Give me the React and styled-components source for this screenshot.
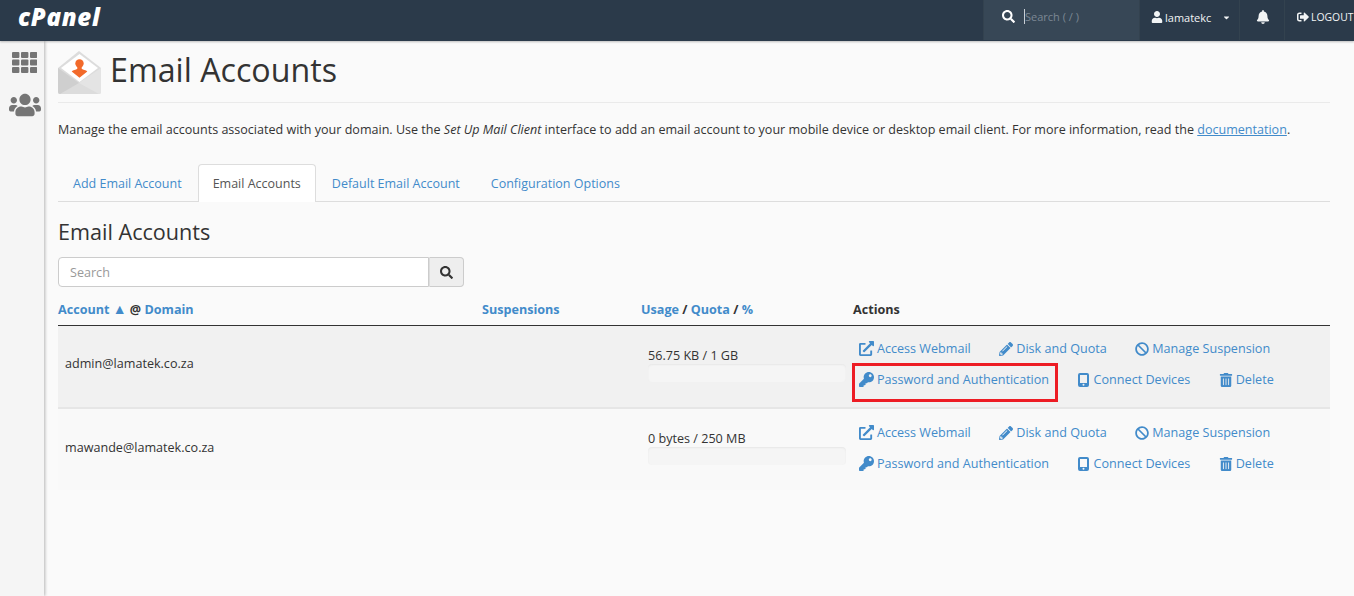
import styled, { createGlobalStyle } from 'styled-components';
import {
  FaBan,
  FaBell,
  FaCaretDown,
  FaExternalLinkAlt,
  FaKey,
  FaPencilAlt,
  FaSearch,
  FaSignOutAlt,
  FaTrashAlt,
  FaUser,
  FaUsers,
} from 'react-icons/fa';

const GlobalStyle = createGlobalStyle`
  html, body {
    margin: 0;
    height: 100%;
    overflow: hidden;
    background: #fafafa;
  }
  * { box-sizing: border-box; }
  body {
    font-family: "Open Sans", "Liberation Sans", sans-serif;
    font-size: 12.6px;
    color: #333;
  }
`;

const Page = styled.div`
  height: 596px;
  display: flex;
  flex-direction: column;
`;

const TopBar = styled.header`
  height: 41px;
  flex: none;
  background: #2b3a4a;
  display: flex;
  align-items: stretch;
  color: #fff;
  box-shadow: 0 1px 2px rgba(0, 0, 0, 0.25);
  position: relative;
  z-index: 2;
  overflow: hidden;
`;

const Logo = styled.div`
  margin: 0 auto 0 18px;
  font-size: 24px;
  line-height: 34px;
  font-weight: 800;
  font-style: italic;
  letter-spacing: 0.7px;
  color: #fff;
`;

const TopSearch = styled.div`
  width: 156px;
  background: #374756;
  border-left: 1px solid #33424f;
  display: flex;
  align-items: center;
  height: 40px;
  padding: 0 0 7px 18px;
  font-size: 11px;
  color: #7c8894;
  svg { flex: none; }
`;

const Caret = styled.span`
  width: 1px;
  height: 15px;
  background: #c8ced4;
  margin-left: 9px;
`;

const TopItem = styled.div`
  width: ${(p) => p.$width}px;
  flex: none;
  height: 40px;
  border-left: 1px solid #33424f;
  display: flex;
  align-items: center;
  padding: 0 0 6px ${(p) => p.$pad}px;
  font-size: ${(p) => p.$size ?? 11}px;
  gap: 2px;
  color: #f2f4f5;
  white-space: nowrap;
  svg { flex: none; }
`;

const Body = styled.div`
  flex: 1;
  display: flex;
  min-height: 0;
`;

const SideBar = styled.nav`
  width: 44px;
  flex: none;
  background: #f5f5f5;
  box-shadow: 1px 0 3px rgba(0, 0, 0, 0.28);
  display: flex;
  flex-direction: column;
  align-items: center;
  padding: 11px 0 0 5px;
  gap: 16px;
  color: #757575;
`;

const Content = styled.main`
  flex: 1;
  min-width: 0;
  padding: 9px 24px 0 14px;
`;

const TitleRow = styled.div`
  display: flex;
  align-items: flex-start;
  gap: 9px;
  height: 53px;
  border-bottom: 1px solid #eaeaea;
  svg { margin-top: 1px; }
`;

const Title = styled.h1`
  margin: -1px 0 0;
  font-size: 32.2px;
  line-height: 42px;
  font-weight: 400;
  color: #333;
`;

const Intro = styled.p`
  margin: 18px 0 0;
  font-size: 12.55px;
  line-height: 18px;
  white-space: nowrap;
  color: #333;
  a {
    color: #428bca;
    text-decoration: underline;
  }
`;

const Tabs = styled.div`
  display: flex;
  gap: 1px;
  margin-top: 25px;
  height: 38px;
  font-size: 12.5px;
  border-bottom: 1px solid #ddd;
`;

const Tab = styled.div`
  height: ${(p) => (p.$active ? '38px' : '37px')};
  padding: 0 14px;
  display: flex;
  align-items: center;
  color: ${(p) => (p.$active ? '#555' : '#428bca')};
  background: ${(p) => (p.$active ? '#fff' : 'transparent')};
  border: 1px solid ${(p) => (p.$active ? '#ddd' : 'transparent')};
  border-bottom: 0;
  border-radius: 4px 4px 0 0;
`;

const SectionTitle = styled.h2`
  margin: 16px 0 0;
  font-size: 21.6px;
  line-height: 27px;
  font-weight: 400;
  color: #333;
`;

const SearchGroup = styled.div`
  display: flex;
  width: 406px;
  height: 30px;
  margin-top: 12px;
`;

const SearchInput = styled.div`
  flex: 1;
  background: #fff;
  border: 1px solid #ccc;
  border-radius: 4px 0 0 4px;
  padding: 0 11px;
  display: flex;
  align-items: center;
  color: #999;
`;

const SearchButton = styled.div`
  width: 35px;
  background: #eee;
  border: 1px solid #ccc;
  border-left-color: #ddd;
  border-radius: 0 4px 4px 0;
  display: flex;
  align-items: center;
  justify-content: center;
  color: #333;
`;

const columns = '424px 159px 212px 1fr';

const HeaderRow = styled.div`
  display: grid;
  grid-template-columns: ${columns};
  height: 39px;
  border-bottom: 1px solid #333;
  padding-top: 14px;
  font-weight: 700;
  line-height: 18px;
  color: #333;
  a {
    color: #428bca;
  }
`;

const SortArrow = styled.span`
  font-size: 14px;
  line-height: 14px;
`;

const Row = styled.div`
  display: grid;
  grid-template-columns: ${columns};
  height: ${(p) => p.$height}px;
  background: ${(p) => (p.$shaded ? '#f1f1f1' : '#f9f9f9')};
  border-bottom: ${(p) => (p.$shaded ? '2px solid #e6e6e6' : '0')};
`;

const EmailCell = styled.div`
  padding: ${(p) => p.$top}px 0 0 7px;
  line-height: 18px;
`;

const UsageCell = styled.div`
  padding: 21px 7px 0;
  line-height: 18px;
`;

const QuotaBar = styled.div`
  width: 198px;
  height: 18px;
  margin-top: -1px;
  background: #f5f5f5;
  border-radius: 4px;
  box-shadow: inset 0 1px 2px rgba(0, 0, 0, 0.06);
`;

const ActionsCell = styled.div`
  padding: ${(p) => p.$top}px 0 0 6px;
`;

const ActionLine = styled.div`
  display: flex;
  gap: 28.5px;
  height: 31px;
`;

const ActionLink = styled.div`
  position: relative;
  display: flex;
  align-items: center;
  color: #428bca;
  white-space: nowrap;
  ${(p) =>
    p.$marked &&
    `&::after {
      content: '';
      position: absolute;
      left: -7px;
      right: -9px;
      top: -1px;
      height: 33px;
      border: 3px solid #ed1c24;
    }`}
`;

const IconBox = styled.span`
  width: ${(p) => p.$box}px;
  flex: none;
  display: flex;
  align-items: center;
`;

const EnvelopeIcon = () => (
  <svg width="43" height="43" viewBox="0 0 43 43" style={{ flex: 'none' }}>
    <path d="M0 17 L21 0 L43 17 V41 a2 2 0 0 1-2 2 H2 a2 2 0 0 1-2-2 Z" fill="#dcdcdc" />
    <path d="M21.5 3 L40 17 L21.5 31 L3 17 Z" fill="#fff" />
    <circle cx="21.5" cy="12.5" r="4.2" fill="#f26a2b" />
    <path
      d="M19.3 15.5 h4.4 v2.3 c1.2 1 4.4 1.5 5.6 2.6 L21.5 26.8 L13.7 20.4 c1.2-1.1 4.4-1.6 5.6-2.6 Z"
      fill="#f26a2b"
    />
    <path d="M0 17 L21 32 L2 43 a2 2 0 0 1-2-2 Z" fill="#cfcfcf" />
    <path d="M43 17 L21 32 L41 43 a2 2 0 0 0 2-2 Z" fill="#e4e4e4" />
  </svg>
);

const GridIcon = () => (
  <svg width="25" height="21" viewBox="0 0 25 21" fill="currentColor">
    {[0, 1, 2].flatMap((row) =>
      [0, 1, 2].map((col) => (
        <rect key={`${row}-${col}`} x={col * 9} y={row * 7.5} width="7.4" height="6" rx="1" />
      )),
    )}
  </svg>
);

const MobileIcon = () => (
  <svg width="11" height="14" viewBox="0 0 11 14" fill="currentColor">
    <path
      fillRule="evenodd"
      d="M2 0h7a2 2 0 0 1 2 2v10a2 2 0 0 1-2 2H2a2 2 0 0 1-2-2V2a2 2 0 0 1 2-2Zm0 2v8h7V2Zm3.5 8.7a1 1 0 1 0 0 2 1 1 0 0 0 0-2Z"
    />
  </svg>
);

const actionSet = [
  [
    { label: 'Access Webmail', Icon: FaExternalLinkAlt, box: 18, size: 15 },
    { label: 'Disk and Quota', Icon: FaPencilAlt, box: 17, size: 14 },
    { label: 'Manage Suspension', Icon: FaBan, box: 17, size: 14 },
  ],
  [
    { label: 'Password and Authentication', Icon: FaKey, box: 18, size: 15, marks: true },
    { label: 'Connect Devices', Icon: MobileIcon, box: 16 },
    { label: 'Delete', Icon: FaTrashAlt, box: 17, size: 14 },
  ],
];

const accounts = [
  { email: 'admin@lamatek.co.za', usage: '56.75 KB / 1 GB', marked: true, height: 83, top: 29, actionsTop: 7 },
  { email: 'mawande@lamatek.co.za', usage: '0 bytes / 250 MB', marked: false, height: 81, top: 30, actionsTop: 8 },
];

const App = () => (
  <Page>
    <GlobalStyle />
    <TopBar>
      <Logo>cPanel</Logo>
      <TopSearch>
        <FaSearch size={13} color="#fff" />
        <Caret />
        <span>Search ( / )</span>
      </TopSearch>
      <TopItem $width={100} $pad={11}>
        <FaUser size={12} />
        <span>lamatekc</span>
        <FaCaretDown size={9} style={{ marginLeft: 9 }} />
      </TopItem>
      <TopItem $width={45} $pad={16}>
        <FaBell size={14} />
      </TopItem>
      <TopItem $width={70} $pad={12} $size={10.4}>
        <FaSignOutAlt size={12} />
        <span>LOGOUT</span>
      </TopItem>
    </TopBar>
    <Body>
      <SideBar>
        <GridIcon />
        <FaUsers size={32} />
      </SideBar>
      <Content>
        <TitleRow>
          <EnvelopeIcon />
          <Title>Email Accounts</Title>
        </TitleRow>
        <Intro>
          Manage the email accounts associated with your domain. Use the <em>Set Up Mail Client</em> interface to add an email account to your mobile device or desktop email client. For more information, read the <a>documentation</a>.
        </Intro>
        <Tabs>
          <Tab>Add Email Account</Tab>
          <Tab $active>Email Accounts</Tab>
          <Tab>Default Email Account</Tab>
          <Tab>Configuration Options</Tab>
        </Tabs>
        <SectionTitle>Email Accounts</SectionTitle>
        <SearchGroup>
          <SearchInput>Search</SearchInput>
          <SearchButton>
            <FaSearch size={13} />
          </SearchButton>
        </SearchGroup>
        <HeaderRow>
          <div>
            <a>Account <SortArrow>▲</SortArrow></a> @ <a>Domain</a>
          </div>
          <div>
            <a>Suspensions</a>
          </div>
          <div>
            <a>Usage</a> / <a>Quota</a> / <a>%</a>
          </div>
          <div>Actions</div>
        </HeaderRow>
        {accounts.map((account, index) => (
          <Row key={account.email} $shaded={index === 0} $height={account.height}>
            <EmailCell $top={account.top}>{account.email}</EmailCell>
            <div />
            <UsageCell>
              {account.usage}
              <QuotaBar />
            </UsageCell>
            <ActionsCell $top={account.actionsTop}>
              {actionSet.map((line, lineIndex) => (
                <ActionLine key={lineIndex}>
                  {line.map(({ label, Icon, box, size, marks }) => (
                    <ActionLink key={label} $marked={marks && account.marked}>
                      <IconBox $box={box}>
                        <Icon size={size} />
                      </IconBox>
                      {label}
                    </ActionLink>
                  ))}
                </ActionLine>
              ))}
            </ActionsCell>
          </Row>
        ))}
      </Content>
    </Body>
  </Page>
);

export default App;
